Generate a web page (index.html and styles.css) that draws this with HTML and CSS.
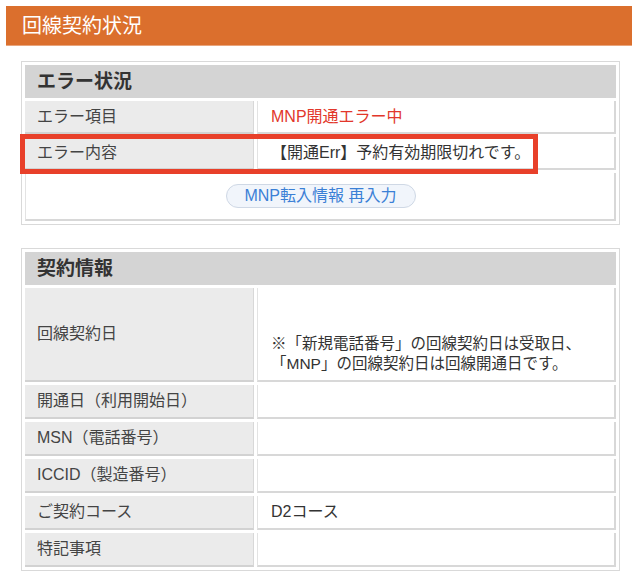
FILE: index.html
```html
<!DOCTYPE html>
<html lang="ja">
<head>
<meta charset="utf-8">
<title>回線契約状況</title>
<link rel="stylesheet" href="styles.css">
</head>
<body>
<div class="page">
  <div class="title">回線契約状況</div>

  <div class="panel panel-error">
    <table class="info">
      <colgroup><col class="col-label"><col class="col-value"></colgroup>
      <tr><th colspan="2" class="sec">エラー状況</th></tr>
      <tr><td class="label">エラー項目</td><td class="value err">MNP開通エラー中</td></tr>
      <tr><td class="label">エラー内容</td><td class="value">【開通Err】予約有効期限切れです。</td></tr>
      <tr><td colspan="2" class="value action"><span class="btn">MNP転入情報 再入力</span></td></tr>
    </table>
    <div class="highlight"></div>
  </div>

  <div class="panel panel-contract">
    <table class="info">
      <colgroup><col class="col-label"><col class="col-value"></colgroup>
      <tr><th colspan="2" class="sec">契約情報</th></tr>
      <tr class="tall"><td class="label">回線契約日</td><td class="value"><div class="note">※「新規電話番号」の回線契約日は受取日、<br>「MNP」の回線契約日は回線開通日です。</div></td></tr>
      <tr><td class="label">開通日（利用開始日）</td><td class="value"></td></tr>
      <tr><td class="label">MSN（電話番号）</td><td class="value"></td></tr>
      <tr><td class="label">ICCID（製造番号）</td><td class="value"></td></tr>
      <tr><td class="label">ご契約コース</td><td class="value">D2コース</td></tr>
      <tr><td class="label">特記事項</td><td class="value"></td></tr>
    </table>
  </div>
</div>
</body>
</html>
```

FILE: styles.css
```css
* { box-sizing: border-box; }
html, body { margin: 0; padding: 0; background: #fff; }
body {
  font-family: "Liberation Sans", "Noto Sans CJK JP", sans-serif;
  color: #333;
}
.page { padding-top: 6px; padding-left: 6px; }

.title {
  height: 40px;
  line-height: 40px;
  background: #db6f2d;
  border-bottom: 1px solid #e9a57c;
  color: #fff;
  font-size: 20px;
  padding-left: 16px;
}

.panel {
  position: relative;
  margin-left: 15px;
  width: 599px;
  border: 1px solid #d9d9d9;
}
.panel-error { margin-top: 15px; }
.panel-contract { margin-top: 23px; }

.info {
  width: 100%;
  border-collapse: separate;
  border-spacing: 3px;
  table-layout: fixed;
}
.col-label { width: 229px; }

.info th, .info td {
  padding: 0 12px;
  font-size: 16px;
  line-height: 20px;
  text-align: left;
  vertical-align: middle;
}

.info th.sec {
  height: 33px;
  background: #d4d4d4;
  font-weight: bold;
  font-size: 19px;
  color: #333;
}

.info td { height: 33px; }
.panel-contract .info td { height: 34px; }
.panel-contract .info tr.tall td { height: 94px; }

.label {
  background: #ebebeb;
  color: #444;
  border-right: 1px solid #d8d8d8;
  border-bottom: 2px solid #d2d2d2;
}
.value {
  background: #fff;
  color: #333;
  border-left: 1px solid #e3e3e3;
  border-right: 2px solid #d8d8d8;
  border-bottom: 2px solid #d8d8d8;
  padding-left: 13px !important;
}
.err { color: #e2372b; }

.info td.action {
  height: 48px;
  text-align: center;
}
.btn {
  display: inline-block;
  width: 190px;
  height: 24px;
  line-height: 22px;
  border: 1px solid #cfd8e5;
  border-radius: 12px;
  background: #f1f5fb;
  color: #3b80d6;
  font-size: 16px;
  text-align: center;
}

.note {
  padding-top: 40px;
  font-size: 15.5px;
  line-height: 20px;
}

.highlight {
  position: absolute;
  left: -2px;
  top: 72px;
  width: 518px;
  height: 40px;
  border: 5px solid #e8402a;
  pointer-events: none;
}
```
